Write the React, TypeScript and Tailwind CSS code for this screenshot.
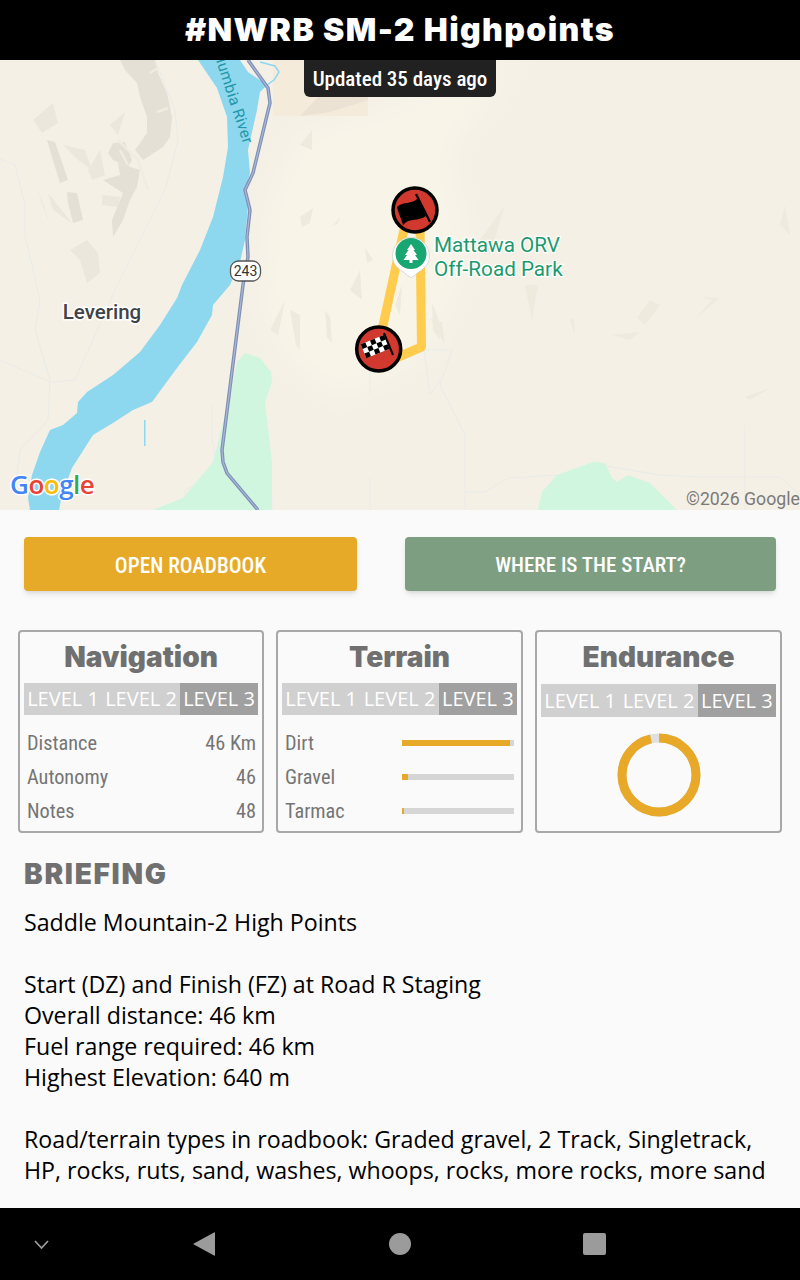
import React from 'react';

// ridge shading west of the river
const darkHills = [
  '120,60 155,60 158,73 167,93 172,117 170,137 163,147 143,160 135,150 147,133 147,117 140,97 137,83 125,70',
  '113,143 125,142 132,160 128,167 113,160 108,153',
  '118,163 140,170 137,187 130,200 123,220 113,237 112,220 123,193 103,180 120,175',
  '67,192 77,193 83,220 73,223 68,203',
  '47,140 55,142 68,180 60,183 52,157',
];
const softHills = [
  '33,120 53,103 58,123 47,130 42,133',
  '37,187 50,223 43,207',
  '48,193 72,223 53,210',
  '70,250 87,240 98,253 100,273 87,283 80,260',
  '63,145 85,150 92,170 78,160',
  '88,170 100,150 105,175 92,180',
  '110,125 125,112 118,135',
  '102,195 120,197 118,207 102,205',
];
// faint slivers on the east side
const slivers = [
  '300,217 313,208 310,223 302,227',
  '332,227 340,217 338,223',
  '325,310 330,317 332,343 327,337',
  '365,248 373,260 367,263',
  '432,303 438,317 440,340 433,330',
  '290,310 296,345 300,350 300,315',
  '270,330 285,300 278,335',
  '430,318 445,345 442,322',
  '525,285 532,320 538,285',
  '570,320 575,335 574,318',
  '637,318 650,300 660,305 645,325',
  '630,340 612,335 640,332',
  '700,297 712,300 696,318 720,298',
  '745,397 772,387 750,400',
  '740,372 755,365 735,375',
  '785,205 790,235 780,225',
  '300,145 312,130 312,150',
  '480,240 505,205 490,255',
  '350,290 360,270 362,300',
  '395,305 402,285 400,315',
];

function MapCanvas() {
  return (
    <svg viewBox="0 60 800 450" className="block h-full w-full" fontFamily="Roboto, sans-serif">
      <defs>
        <filter id="soft" x="-20%" y="-20%" width="140%" height="140%">
          <feGaussianBlur stdDeviation="14" />
        </filter>
      </defs>
      <rect x="0" y="60" width="800" height="450" fill="#f4f0e6" />
      {/* lighter hill tint east of the river */}
      <path d="M262 300 L268 200 L300 130 L380 110 L470 70 L520 60 L450 150 L470 260 L430 350 L340 400 L285 360 Z" fill="#f8f4e8" filter="url(#soft)" />
      <rect x="273" y="60" width="95" height="56" fill="#f5ebdb" />
      <path d="M300 116 L325 90 L345 96 L368 84 L368 100 L330 112 Z" fill="#ebe2d3" />
      {softHills.map((h, i) => (
        <polygon key={i} points={h} fill="#ebe7dc" />
      ))}
      {darkHills.map((h, i) => (
        <polygon key={i} points={h} fill="#e4e0d6" />
      ))}
      <path d="M157 112 L168 108 M150 73 L158 68 M118 140 L138 160 L148 190 M120 150 L128 165" stroke="#f0ecdf" strokeWidth="2.500" fill="none" />
      <g fill="#eeeadd">
        {slivers.map((s, i) => (
          <polygon key={i} points={s} />
        ))}
      </g>
      {/* thin tracks */}
      <g stroke="#e9ebe9" strokeWidth="1" fill="none">
        <path d="M155 60 L175 110 L178 140 L165 190 L115 290 L75 380 L52 382" />
        <path d="M0 159 L15 165 L25 205 L25 235 L40 300 L35 330 L50 380 L48 420 L20 450 L15 490" />
        <path d="M0 360 L50 382" />
        <path d="M212 405 L212 440 L213 442 L217 475 L185 490 L185 510 M272 493 L272 510" />
        <path d="M424 350 L452 350 L440 385 L465 435 L465 510 M424 350 L430 395 L440 380" />
        <path d="M370 360 L370 395 M370 477 L370 510" />
        <path d="M465 492 L485 492 L508 478 L560 475 L600 465 L612 467 L660 475 L700 477 L780 477 L800 495" />
        <path d="M745 425 L745 510" />
      </g>
      {/* park land */}
      <polygon points="245,353 260,358 271,372 272,382 265,402 272,462 272,510 153,510 183,498 213,462 230,395 237,362" fill="#d0f6e0" />
      <polygon points="538,510 542,492 557,475 593,462 605,463 612,478 617,482 628,475 650,483 677,510" fill="#d0f6e0" />
      {/* Columbia River */}
      <polygon
        fill="#8ed8ef"
        points="198,60 217,88 227,117 228,147 223,177 213,217 200,250 182,285 177,298 160,325 140,352 113,375 87,392 78,402 77,413 63,425 50,430 40,452 32,475 28,498 30,510 59,510 62,495 72,468 93,435 113,423 133,410 152,402 177,368 197,342 212,315 213,305 230,285 240,262 245,240 248,207 245,190 250,173 248,150 257,110 260,92 267,85 248,72 240,60"
      />
      <path d="M260 62 L275 66 L279 72 L274 80 L264 87" stroke="#8ed8ef" strokeWidth="1.500" fill="none" />
      <rect x="144" y="420" width="1.500" height="26" fill="#8ed8ef" />
      {/* highway */}
      <path d="M248 60 L268 88 L270 103 L253 173 L245 190 L250 210 L247 237 L248 257 L243 285 L222 450 L223 462 L227 473 L258 510" stroke="#7f8fb5" strokeWidth="3.500" fill="none" />
      <path d="M248 60 L268 88 L270 103 L253 173 L245 190 L250 210 L247 237 L248 257 L243 285 L222 450 L223 462 L227 473 L258 510" stroke="#a9b6d6" strokeWidth="1.200" fill="none" />
      <text transform="translate(210 42) rotate(72)" fontSize="15.500" fill="#1f97a8" letterSpacing="0.300">
        Columbia River
      </text>
      <rect x="230.500" y="261" width="30" height="20" rx="8" fill="#fff" stroke="#555" strokeWidth="1.300" />
      <text x="245.500" y="276" textAnchor="middle" fontSize="14" fill="#333">243</text>
      <text x="102" y="319" textAnchor="middle" fontSize="20.500" fontWeight="500" fill="#3f4246" stroke="#fff" strokeWidth="3" paintOrder="stroke">
        Levering
      </text>
      {/* route */}
      <path d="M405 225 L382 330 M420 225 L421.500 347 L396 358" stroke="#ffcc4d" strokeWidth="9" fill="none" strokeLinejoin="round" />
      {/* finish marker */}
      <circle cx="378.700" cy="349" r="22" fill="#d1392f" stroke="#000" strokeWidth="3.500" />
      <g transform="rotate(-22 378 347)">
        <rect x="363" y="338" width="25" height="15" fill="#fff" rx="1" />
        {[0, 1, 2, 3, 4].map((c) =>
          [0, 1, 2].map((r) =>
            (c + r) % 2 === 0 ? <rect key={`${c}-${r}`} x={363 + c * 5} y={338 + r * 5} width="5" height="5" fill="#000" /> : null,
          ),
        )}
      </g>
      <path d="M384 333 L393 355" stroke="#000" strokeWidth="2" />
      {/* start marker */}
      <circle cx="415" cy="210" r="22" fill="#d1392f" stroke="#000" strokeWidth="3.500" />
      <path d="M397 207 C403 201 412 205 418 198 L426 216 C418 222 410 217 403 225 C401 218 398 212 397 207 Z" fill="#000" />
      <path d="M416 194 L430 222" stroke="#000" strokeWidth="2.200" />
      {/* park pin */}
      <path d="M394 263 A18.500 18.500 0 1 1 428 263 C425 269 419 271 414 276 Q411 279 408 276 C403 271 397 269 394 263 Z" fill="#fff" stroke="#bdbdbd" strokeWidth="0.500" />
      <circle cx="411" cy="253.500" r="15.500" fill="#18a672" />
      <path d="M411 244 L415 250 L413.500 250 L417 255 L415 255 L418.500 260 L412.500 260 L412.500 263 L409.500 263 L409.500 260 L403.500 260 L407 255 L405 255 L408.500 250 L407 250 Z" fill="#fff" />
      <g fontSize="20.700" fill="#1d9a6c" stroke="#fff" strokeWidth="2.500" paintOrder="stroke">
        <text x="434" y="252">Mattawa ORV</text>
        <text x="434" y="276">Off-Road Park</text>
      </g>
      {/* attribution */}
      <text x="10" y="494" fontFamily="'Open Sans', sans-serif" fontSize="26" fontWeight="600" stroke="#fff" strokeWidth="3" paintOrder="stroke" letterSpacing="-0.500">
        <tspan fill="#4285f4">G</tspan>
        <tspan fill="#ea4335">o</tspan>
        <tspan fill="#fbbc05">o</tspan>
        <tspan fill="#4285f4">g</tspan>
        <tspan fill="#34a853">l</tspan>
        <tspan fill="#ea4335">e</tspan>
      </text>
      <text x="686" y="505" fontSize="17.700" fill="#7a7a7a">©2026 Google</text>
    </svg>
  );
}

function LevelBar({ tall }: { tall?: boolean }) {
  return (
    <div className={`mx-1 flex pb-[1px] text-center font-['Open_Sans',sans-serif] text-[20px] text-white ${tall ? 'mt-[1px] h-[34px] leading-[33px]' : 'h-[33px] leading-[32px]'}`}>
      <div className="h-full flex-1 bg-[#d0d0d0]">LEVEL 1</div>
      <div className="h-full flex-1 bg-[#d0d0d0]">LEVEL 2</div>
      <div className="h-full flex-1 bg-[#a0a0a0]">LEVEL 3</div>
    </div>
  );
}

function Card({ title, tall, children }: { title: string; tall?: boolean; children: React.ReactNode }) {
  return (
    <div className="h-[203px] rounded border-2 border-[#a8a8a8]">
      <div className="flex h-[51px] items-center justify-center pb-[2px] font-['Inter',sans-serif] text-[28px] font-black text-[#707070]">{title}</div>
      <LevelBar tall={tall} />
      {children}
    </div>
  );
}

function Row({ label, value }: { label: string; value: string }) {
  return (
    <div className="flex h-[34px] items-center justify-between pl-[7px] pr-[6px] font-['Roboto',sans-serif] text-[20.3px] text-[#757575] [font-stretch:75%]">
      <span>{label}</span>
      <span>{value}</span>
    </div>
  );
}

function BarRow({ label, pct }: { label: string; pct: number }) {
  return (
    <div className="flex h-[34px] items-center px-[7px] font-['Roboto',sans-serif] text-[20.3px] text-[#757575] [font-stretch:75%]">
      <span className="w-[117px] shrink-0">{label}</span>
      <div className="h-[6px] w-[112px] bg-[#d6d6d6]">
        <div className="h-full bg-[#e6a928]" style={{ width: `${pct}%` }} />
      </div>
    </div>
  );
}

export default function App() {
  return (
    <div className="flex h-[1280px] flex-col overflow-hidden bg-[#fafafa]">
      {/* Title bar */}
      <div className="flex h-[60px] shrink-0 items-center justify-center bg-black font-['Inter',sans-serif] text-[32px] font-black tracking-[1.4px] text-white">
        #NWRB SM-2 Highpoints
      </div>

      {/* Map */}
      <div className="relative h-[450px] shrink-0">
        <MapCanvas />
        <div className="absolute left-[304px] top-0 flex h-[37px] w-[192px] items-center justify-center rounded-b-md bg-[#212121] pt-[3px] font-['Roboto',sans-serif] text-[21px] font-medium text-white [font-stretch:75%]">
          Updated 35 days ago
        </div>
      </div>

      {/* Content */}
      <div className="min-h-0 flex-1 overflow-hidden">
        <div className="flex justify-between px-6 pt-[27px]">
          <div className="flex h-[54px] w-[333px] items-center justify-center rounded-sm bg-[#e6a928] pt-[3px] font-['Roboto',sans-serif] text-[21.3px] font-medium text-white shadow-md [font-stretch:75%]">
            OPEN ROADBOOK
          </div>
          <div className="flex h-[54px] w-[371px] items-center justify-center rounded-sm bg-[#7d9e80] pt-[3px] font-['Roboto',sans-serif] text-[21px] font-medium text-white shadow-md [font-stretch:75%]">
            WHERE IS THE START?
          </div>
        </div>

        <div className="mt-[39px] grid grid-cols-[246px_247px_247px] gap-3 px-[18px]">
          <Card title="Navigation">
            <div className="mt-[10px]">
              <Row label="Distance" value="46 Km" />
              <Row label="Autonomy" value="46" />
              <Row label="Notes" value="48" />
            </div>
          </Card>
          <Card title="Terrain">
            <div className="mt-[10px]">
              <BarRow label="Dirt" pct={96} />
              <BarRow label="Gravel" pct={5} />
              <BarRow label="Tarmac" pct={2} />
            </div>
          </Card>
          <Card title="Endurance" tall>
            <div className="mt-[15px] flex justify-center">
              <svg width="84" height="84" viewBox="0 0 84 84">
                <circle cx="42" cy="42" r="37" fill="none" stroke="#e0e0e0" strokeWidth="9" />
                <circle cx="42" cy="42" r="37" fill="none" stroke="#e8a928" strokeWidth="9" strokeDasharray="224 232.5" transform="rotate(-90 42 42)" />
              </svg>
            </div>
          </Card>
        </div>

        <div className="px-6 pt-[24px]">
          <div className="font-['Inter',sans-serif] text-[28px] font-black leading-[35px] tracking-[1.7px] text-[#707070]">BRIEFING</div>
          <div className="mt-[15px] font-['Open_Sans',sans-serif] text-[23.2px] leading-[31px] text-black">
            <p>Saddle Mountain-2 High Points</p>
            <p className="mt-[31px]">Start (DZ) and Finish (FZ) at Road R Staging</p>
            <p>Overall distance: 46 km</p>
            <p>Fuel range required: 46 km</p>
            <p>Highest Elevation: 640 m</p>
            <p className="mt-[31px]">Road/terrain types in roadbook: Graded gravel, 2 Track, Singletrack,</p>
            <p>HP, rocks, ruts, sand, washes, whoops, rocks, more rocks, more sand</p>
          </div>
        </div>
      </div>

      {/* Android nav bar */}
      <div className="relative flex h-[72px] shrink-0 items-center bg-black">
        <svg width="800" height="72" viewBox="0 0 800 72" fill="#9b9b9b">
          <path d="M35 33 L41.500 40 L48 33" fill="none" stroke="#9b9b9b" strokeWidth="1.800" />
          <path d="M193 36 L214 24.500 Q215 24 215 25 L215 47 Q215 48 214 47.500 Z" />
          <circle cx="400" cy="36" r="11" />
          <rect x="583" y="25" width="23" height="22" rx="2" />
        </svg>
      </div>
    </div>
  );
}
